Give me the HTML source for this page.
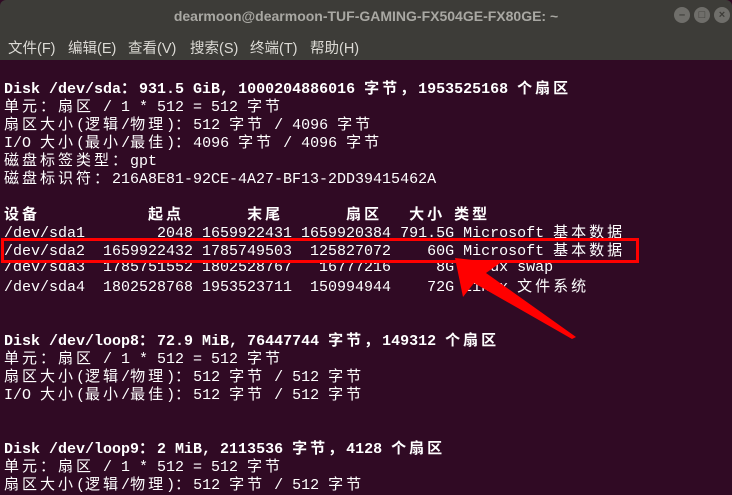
<!DOCTYPE html>
<html><head><meta charset="utf-8"><style>
body{margin:0;width:732px;height:494px;overflow:hidden;background:#300a24;position:relative;font-family:"Liberation Mono","Noto Sans CJK SC",monospace;}
.tb{position:absolute;left:0;top:0;width:732px;height:33px;background:#3d3c38;border-radius:6px 6px 0 0;}
.tt{position:absolute;left:0;width:732px;top:8px;text-align:center;color:#a9a8a3;font:bold 14px "Liberation Sans","Noto Sans CJK SC",sans-serif;}
.btn{position:absolute;top:7px;width:16px;height:16px;border-radius:50%;background:#6f6e6a;color:#3d3c38;font:bold 11px "Liberation Sans",sans-serif;text-align:center;line-height:16px;}
.mb{position:absolute;left:0;top:33px;width:732px;height:27px;background:#3d3c38;color:#dcdad5;font:14.5px "Liberation Sans","Noto Sans CJK SC",sans-serif;}
.mb span{position:absolute;top:4px;}
#t{position:absolute;left:4px;top:79px;font-size:15px;color:#fff;}
#t div{height:18px;line-height:18px;white-space:pre;overflow:visible;}
.c{letter-spacing:3px;font-family:"Noto Sans CJK SC",sans-serif;line-height:18px;}
b{font-weight:bold;}
</style></head><body>
<div class="tb"><div class="tt">dearmoon@dearmoon-TUF-GAMING-FX504GE-FX80GE: ~</div>
<div class="btn" style="left:674px">–</div><div class="btn" style="left:694px">□</div><div class="btn" style="left:714px">×</div></div>
<div class="mb"><span style="left:8px">文件(F)</span><span style="left:68px">编辑(E)</span><span style="left:128px">查看(V)</span><span style="left:190px">搜索(S)</span><span style="left:250px">终端(T)</span><span style="left:310px">帮助(H)</span></div>
<div id="t">
<div><b>Disk /dev/sda<span class="c">：</span>931.5 GiB, 1000204886016 <span class="c">字节，</span>1953525168 <span class="c">个扇区</span></b></div>
<div><span class="c">单元：扇区</span> / 1 * 512 = 512 <span class="c">字节</span></div>
<div><span class="c">扇区大小</span>(<span class="c">逻辑</span>/<span class="c">物理</span>)<span class="c">：</span>512 <span class="c">字节</span> / 4096 <span class="c">字节</span></div>
<div>I/O <span class="c">大小</span>(<span class="c">最小</span>/<span class="c">最佳</span>)<span class="c">：</span>4096 <span class="c">字节</span> / 4096 <span class="c">字节</span></div>
<div><span class="c">磁盘标签类型：</span>gpt</div>
<div><span class="c">磁盘标识符：</span>216A8E81-92CE-4A27-BF13-2DD39415462A</div>
<div> </div>
<div><b><span class="c">设备</span>            <span class="c">起点</span>       <span class="c">末尾</span>       <span class="c">扇区</span>   <span class="c">大小</span> <span class="c">类型</span></b></div>
<div>/dev/sda1        2048 1659922431 1659920384 791.5G Microsoft <span class="c">基本数据</span></div>
<div>/dev/sda2  1659922432 1785749503  125827072    60G Microsoft <span class="c">基本数据</span></div>
<div>/dev/sda3  1785751552 1802528767   16777216     8G Linux swap</div>
<div>/dev/sda4  1802528768 1953523711  150994944    72G Linux <span class="c">文件系统</span></div>
<div> </div>
<div> </div>
<div><b>Disk /dev/loop8<span class="c">：</span>72.9 MiB, 76447744 <span class="c">字节，</span>149312 <span class="c">个扇区</span></b></div>
<div><span class="c">单元：扇区</span> / 1 * 512 = 512 <span class="c">字节</span></div>
<div><span class="c">扇区大小</span>(<span class="c">逻辑</span>/<span class="c">物理</span>)<span class="c">：</span>512 <span class="c">字节</span> / 512 <span class="c">字节</span></div>
<div>I/O <span class="c">大小</span>(<span class="c">最小</span>/<span class="c">最佳</span>)<span class="c">：</span>512 <span class="c">字节</span> / 512 <span class="c">字节</span></div>
<div> </div>
<div> </div>
<div><b>Disk /dev/loop9<span class="c">：</span>2 MiB, 2113536 <span class="c">字节，</span>4128 <span class="c">个扇区</span></b></div>
<div><span class="c">单元：扇区</span> / 1 * 512 = 512 <span class="c">字节</span></div>
<div><span class="c">扇区大小</span>(<span class="c">逻辑</span>/<span class="c">物理</span>)<span class="c">：</span>512 <span class="c">字节</span> / 512 <span class="c">字节</span></div>
</div>
<div style="position:absolute;left:1px;top:238px;width:632px;height:19px;border:3px solid #f00;"></div>
<svg style="position:absolute;left:0;top:0" width="732" height="494"><polygon points="455,258 500,263 486,273 576,337 572,339 474,283 463,297" fill="#f00"/></svg>
</body></html>
